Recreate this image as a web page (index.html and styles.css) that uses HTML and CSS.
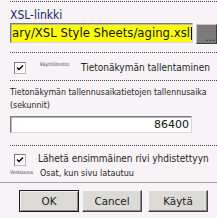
FILE: index.html
```html
<!DOCTYPE html>
<html lang="fi">
<head>
<meta charset="utf-8">
<title>XSL-linkki</title>
<link rel="stylesheet" href="styles.css">
</head>
<body>
<div class="pane">
  <div class="sep sep-top"></div>
  <div class="title">XSL-linkki</div>
  <div class="path-row">
    <div class="textbox path"><span class="path-text">ary/XSL Style Sheets/aging.xsl</span><span class="caret"></span></div>
    <div class="browse"><span class="dots">...</span></div>
  </div>
  <div class="sep sep-2"></div>
  <div class="check-row row-1">
    <span class="checkbox"><svg width="12" height="12" viewBox="0 0 12 12"><path d="M3 5.5 L5 7.5 L9 3.5" fill="none" stroke="#000" stroke-width="1.4"/></svg></span>
    <span class="tiny tiny-1">Käyttöönotto</span>
    <span class="check-label">Tietonäkymän tallentaminen</span>
  </div>
  <div class="sep sep-3"></div>
  <div class="field-label">Tietonäkymän tallennusaikatietojen tallennusaika<br>(sekunnit)</div>
  <div class="textbox num">86400</div>
  <div class="sep sep-4"></div>
  <div class="check-row row-2">
    <span class="checkbox"><svg width="12" height="12" viewBox="0 0 12 12"><path d="M3 5.5 L5 7.5 L9 3.5" fill="none" stroke="#000" stroke-width="1.4"/></svg></span>
    <span class="check-label label-2">Lähetä ensimmäinen rivi yhdistettyyn</span>
  </div>
  <div class="sub-row">
    <span class="tiny tiny-2">Verkkoosa</span>
    <span class="sub-label">Osat, kun sivu latautuu</span>
  </div>
</div>
<div class="footer">
  <button class="btn btn-default">OK</button>
  <button class="btn btn-cancel">Cancel</button>
  <button class="btn btn-apply">Käytä</button>
</div>
</body>
</html>
```
FILE: styles.css
```css
html, body {
  margin: 0;
  padding: 0;
  overflow: hidden;
}
body {
  background: #f7f3f7;
  font-family: "DejaVu Sans Condensed", "DejaVu Sans", sans-serif;
  color: #2a2a2a;
  width: 217px;
  height: 218px;
}
.pane {
  padding-left: 10px;
  display: flex;
  flex-direction: column;
}
.sep {
  height: 0;
  border-top: 1px dotted #4a4a4a;
}
.sep-top { margin-top: 1px; }
.sep-2 { margin-top: 8px; }
.sep-3 { margin-top: 0; }
.sep-4 { margin-top: 12px; }
.title {
  margin-top: 6px;
  font-size: 12px;
  line-height: 14px;
  height: 14px;
  color: #152a5e;
}
.path-row {
  margin-top: 1px;
  display: flex;
  align-items: flex-start;
}
.textbox {
  box-sizing: border-box;
  border: 1px solid;
  border-color: #7a7a7a #d8d8d8 #d8d8d8 #7a7a7a;
  box-shadow: inset 1px 1px 0 #b8b8b8;
}
.path {
  width: 183px;
  height: 20px;
  background: #ffff00;
  display: flex;
  align-items: center;
  overflow: hidden;
  white-space: nowrap;
  font-family: "DejaVu Sans", sans-serif;
  font-size: 11.7px;
  color: #111;
  padding-left: 1px;
}
.caret {
  width: 1px;
  height: 13px;
  background: #000;
  margin-left: 1px;
}
.browse {
  box-sizing: border-box;
  margin-left: 3px;
  margin-top: 1px;
  width: 21px;
  height: 20px;
  flex-shrink: 0;
  background: #7b7b7b;
  border: 1px solid;
  border-color: #c8c8c8 #404040 #404040 #c8c8c8;
  display: flex;
  align-items: flex-end;
  justify-content: flex-end;
  overflow: hidden;
}
.dots {
  font-family: "DejaVu Sans", sans-serif;
  font-size: 10px;
  line-height: 10px;
  color: #222;
  padding-right: 1px;
}
.check-row {
  display: flex;
  align-items: flex-start;
}
.row-1 { height: 27px; }
.row-2 { height: 22px; }
.checkbox {
  box-sizing: border-box;
  width: 12px;
  height: 12px;
  margin-left: 4px;
  background: #fff;
  border: 1px solid;
  border-color: #7c7c7c #b4b4b4 #b4b4b4 #7c7c7c;
  display: flex;
  flex-shrink: 0;
}
.checkbox svg { margin: -1px; }
.row-1 .checkbox { margin-top: 9px; }
.row-2 .checkbox { margin-top: 8px; }
.tiny {
  font-size: 5px;
  line-height: 5px;
  color: #3c4660;
  white-space: nowrap;
}
.tiny-1 {
  margin-top: 9px;
  margin-left: 14px;
  width: 41px;
}
.check-label {
  font-size: 10px;
  line-height: 12px;
  margin-top: 9px;
  white-space: nowrap;
  color: #1e1e1e;
}
.label-2 {
  margin-top: 7px;
  margin-left: 12px;
}
.field-label {
  margin-top: 5px;
  font-size: 8.8px;
  line-height: 13px;
  white-space: nowrap;
  color: #262626;
}
.num {
  margin-top: 4px;
  width: 182px;
  height: 17px;
  background: #fff;
  font-family: "DejaVu Sans", sans-serif;
  font-size: 11px;
  line-height: 15px;
  text-align: right;
  padding-right: 2px;
  color: #111;
}
.sub-row {
  display: flex;
  align-items: flex-start;
  height: 11px;
}
.tiny-2 {
  margin-top: 2px;
  width: 30px;
}
.sub-label {
  font-size: 9px;
  line-height: 11px;
  white-space: nowrap;
  color: #1e1e1e;
}
.footer {
  margin-top: 3px;
  border-top: 1px solid #a4a4a4;
  padding-top: 7px;
  padding-left: 19px;
  display: flex;
  gap: 3px;
}
.btn {
  box-sizing: border-box;
  height: 22px;
  width: 60px;
  margin: 0;
  padding: 0;
  background: #dcdad6;
  font-family: "DejaVu Sans", sans-serif;
  font-size: 10.4px;
  color: #1a1a1a;
  border: 1px solid;
  border-color: #f4f4f4 #404040 #404040 #f4f4f4;
  box-shadow: inset -1px -1px 0 #8a8a8a;
}
.btn-default {
  border-color: #1a1a1a;
  box-shadow: inset 1px 1px 0 #f4f4f4, inset -1px -1px 0 #8a8a8a;
}
.btn-apply {
  margin-left: 3px;
}
```
